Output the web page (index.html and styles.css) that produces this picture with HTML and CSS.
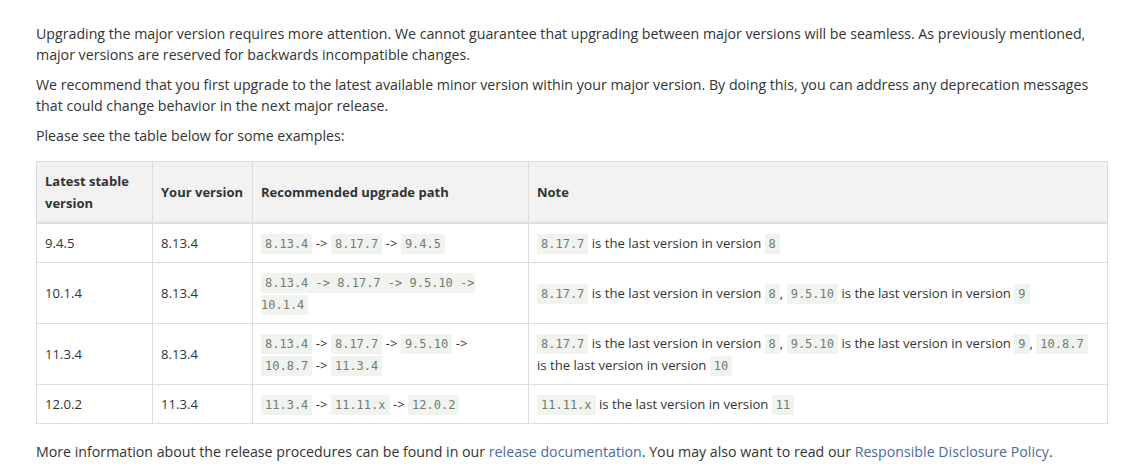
FILE: index.html
```html
<!DOCTYPE html>
<html lang="en">
<head>
<meta charset="utf-8">
<title>Upgrading</title>
<link rel="stylesheet" href="styles.css">
</head>
<body>
<div class="page">
  <p>Upgrading the major version requires more attention. We cannot guarantee that upgrading between major versions will be seamless. As previously mentioned, major versions are reserved for backwards incompatible changes.</p>
  <p>We recommend that you first upgrade to the latest available minor version within your major version. By doing this, you can address any deprecation messages that could change behavior in the next major release.</p>
  <p>Please see the table below for some examples:</p>
  <table class="versions">
    <colgroup>
      <col class="c1"><col class="c2"><col class="c3"><col class="c4">
    </colgroup>
    <thead>
      <tr>
        <th>Latest stable version</th>
        <th>Your version</th>
        <th>Recommended upgrade path</th>
        <th>Note</th>
      </tr>
    </thead>
    <tbody>
      <tr>
        <td>9.4.5</td>
        <td>8.13.4</td>
        <td><code>8.13.4</code> -&gt; <code>8.17.7</code> -&gt; <code>9.4.5</code></td>
        <td><code>8.17.7</code> is the last version in version <code>8</code></td>
      </tr>
      <tr>
        <td>10.1.4</td>
        <td>8.13.4</td>
        <td><code>8.13.4 -&gt; 8.17.7 -&gt; 9.5.10 -&gt; 10.1.4</code></td>
        <td><code>8.17.7</code> is the last version in version <code>8</code>, <code>9.5.10</code> is the last version in version <code>9</code></td>
      </tr>
      <tr>
        <td>11.3.4</td>
        <td>8.13.4</td>
        <td><code>8.13.4</code> -&gt; <code>8.17.7</code> -&gt; <code>9.5.10</code> -&gt; <code>10.8.7</code> -&gt; <code>11.3.4</code></td>
        <td><code>8.17.7</code> is the last version in version <code>8</code>, <code>9.5.10</code> is the last version in version <code>9</code>, <code>10.8.7</code> is the last version in version <code>10</code></td>
      </tr>
      <tr>
        <td>12.0.2</td>
        <td>11.3.4</td>
        <td><code>11.3.4</code> -&gt; <code>11.11.x</code> -&gt; <code>12.0.2</code></td>
        <td><code>11.11.x</code> is the last version in version <code>11</code></td>
      </tr>
    </tbody>
  </table>
  <p>More information about the release procedures can be found in our <a href="#">release documentation</a>. You may also want to read our <a href="#">Responsible Disclosure Policy</a>.</p>
</div>
</body>
</html>
```
FILE: styles.css
```css
html, body {
  margin: 0;
  padding: 0;
  background: #ffffff;
}

.page {
  padding: 23px 18px 0 36px;
  width: 1071px;
  font-family: "Open Sans", "Noto Sans", "Liberation Sans", sans-serif;
  font-size: 14.2px;
  line-height: 21px;
  color: #333333;
}

.page p {
  margin: 0 0 9px 0;
}

.page a {
  color: #4a6aa0;
  text-decoration: none;
}

.versions {
  width: 1071px;
  border-collapse: collapse;
  border: 1px solid #dddddd;
  margin: 15px 0 17px 0;
  font-size: 13.15px;
  line-height: 22px;
  table-layout: fixed;
}

.c1 { width: 116px; }
.c2 { width: 100px; }
.c3 { width: 276px; }
.c4 { width: 579px; }

.versions th {
  background: #f2f2f2;
  text-align: left;
  font-weight: 700;
  font-size: 13px;
  padding: 8px 8px;
  border: 1px solid #dddddd;
  border-bottom: 2px solid #dddddd;
  vertical-align: middle;
}

.versions td {
  padding: 8px 8px;
  border: 1px solid #dddddd;
  vertical-align: middle;
}

.versions code {
  font-family: "DejaVu Sans Mono", "Liberation Mono", monospace;
  font-size: 12px;
  line-height: 1;
  color: #6f7d6f;
  background: #f1f3ef;
  padding: 3px 4px;
}
```
